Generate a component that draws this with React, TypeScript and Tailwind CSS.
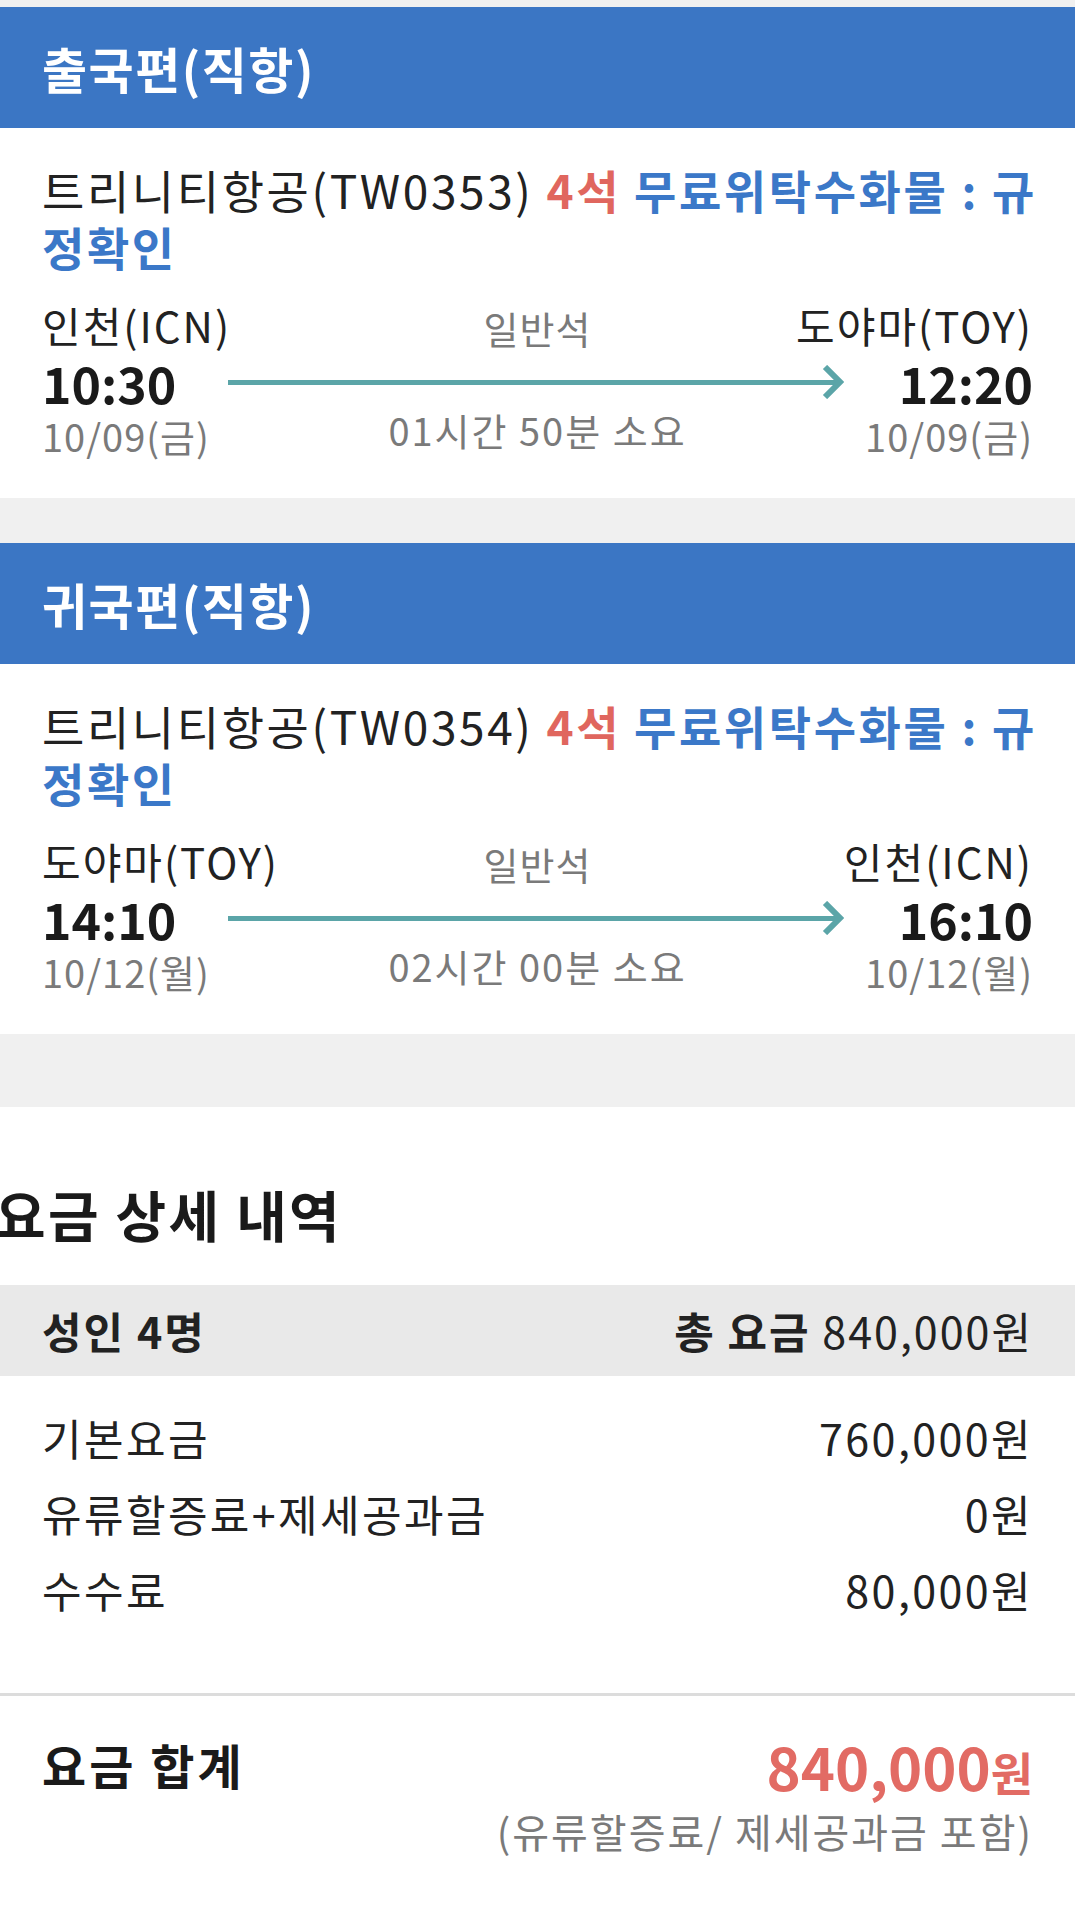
import React from "react";

type FlightProps = {
  title: string;
  airline: string;
  from: string;
  to: string;
  dep: string;
  arr: string;
  date: string;
  dur: string;
};

function Arrow() {
  return (
    <div className="flex flex-1 items-center ml-[52px] mr-[55px]">
      <div className="h-[5px] flex-1 bg-[#5ba5a8]" />
      <svg width="22" height="34" viewBox="0 0 22 34" className="-ml-[16px] shrink-0">
        <polyline
          points="3,2 18,17 3,32"
          fill="none"
          stroke="#5ba5a8"
          strokeWidth="6"
          strokeLinejoin="miter"
        />
      </svg>
    </div>
  );
}

function Flight({ title, airline, from, to, dep, arr, date, dur }: FlightProps) {
  return (
    <div>
      <div className="h-[121px] bg-[#3b76c4] flex items-center px-[42px]">
        <span className="text-white font-bold text-[49px] leading-none tracking-[1.5px]">{title}</span>
      </div>
      <div className="h-[370px] bg-white px-[42px] pt-[33px]">
        <p className="text-[46px] leading-[57px] text-[#222] whitespace-nowrap tracking-[2.6px]">
          {airline} <span className="font-bold text-[#e0665e]">4석</span>{" "}
          <span className="font-bold text-[#3b78c8]">
            무료위탁수화물 : 규
            <br />
            정확인
          </span>
        </p>
        <div className="mt-[27px]">
          <div className="grid grid-cols-[1fr_auto_1fr] items-start">
            <div className="text-[42px] leading-[46px] text-[#222] tracking-[2px]">{from}</div>
            <div className="text-[38px] leading-[46px] text-[#7a7a7a] pt-[3px] tracking-[1px]">일반석</div>
            <div className="text-[42px] leading-[46px] text-[#222] text-right tracking-[2px]">{to}</div>
          </div>
          <div className="flex items-center h-[42px] mt-[10px]">
            <div className="text-[50px] leading-[42px] font-bold text-[#1a1a1a]">{dep}</div>
            <Arrow />
            <div className="text-[50px] leading-[42px] font-bold text-[#1a1a1a]">{arr}</div>
          </div>
          <div className="grid grid-cols-[1fr_auto_1fr] items-start pt-[6px]">
            <div className="text-[38px] leading-[54px] text-[#7a7a7a] tracking-[1px]">{date}</div>
            <div className="text-[38px] leading-[54px] text-[#7a7a7a] -mt-[6px] tracking-[2px]">{dur}</div>
            <div className="text-[38px] leading-[54px] text-[#7a7a7a] text-right tracking-[1px]">{date}</div>
          </div>
        </div>
      </div>
    </div>
  );
}

export default function App() {
  return (
    <div className="w-[1075px] min-h-[1916px] bg-white font-['Noto_Sans_CJK_KR','Noto_Sans',sans-serif] overflow-hidden">
      <div className="h-[7px] bg-[#f0f0f0]" />
      <Flight
        title="출국편(직항)"
        airline="트리니티항공(TW0353)"
        from="인천(ICN)"
        to="도야마(TOY)"
        dep="10:30"
        arr="12:20"
        date="10/09(금)"
        dur="01시간 50분 소요"
      />
      <div className="h-[45px] bg-[#f0f0f0]" />
      <Flight
        title="귀국편(직항)"
        airline="트리니티항공(TW0354)"
        from="도야마(TOY)"
        to="인천(ICN)"
        dep="14:10"
        arr="16:10"
        date="10/12(월)"
        dur="02시간 00분 소요"
      />
      <div className="h-[73px] bg-[#f0f0f0]" />
      <div className="bg-white pt-[75px]">
        <h2 className="text-[55px] leading-[62px] font-bold text-[#1a1a1a] -ml-[5px] tracking-[2.3px]">요금 상세 내역</h2>
        <div className="mt-[41px] h-[91px] bg-[#e9e9e9] flex items-center justify-between px-[42px] text-[43px] text-[#222] tracking-[2px]">
          <span className="font-bold">성인 4명</span>
          <span>
            <span className="font-bold">총 요금</span> 840,000원
          </span>
        </div>
        <div className="px-[42px] pt-[23px] pb-[66px] text-[43px] leading-[76px] text-[#222] tracking-[2.4px]">
          <div className="flex justify-between">
            <span>기본요금</span>
            <span>760,000원</span>
          </div>
          <div className="flex justify-between">
            <span>유류할증료+제세공과금</span>
            <span>0원</span>
          </div>
          <div className="flex justify-between">
            <span>수수료</span>
            <span>80,000원</span>
          </div>
        </div>
        <div className="h-[3px] bg-[#dcdcdc]" />
        <div className="px-[42px] pt-[38px] flex justify-between items-start">
          <div className="text-[48px] leading-[60px] font-bold text-[#1a1a1a] tracking-[3px]">요금 합계</div>
          <div className="text-right">
            <div className="text-[58px] leading-[64px] font-bold text-[#e26b64]">
              840,000<span className="text-[46px]">원</span>
            </div>
            <div className="text-[40px] leading-[56px] text-[#7a7a7a] tracking-[2px]">(유류할증료/ 제세공과금 포함)</div>
          </div>
        </div>
      </div>
    </div>
  );
}
